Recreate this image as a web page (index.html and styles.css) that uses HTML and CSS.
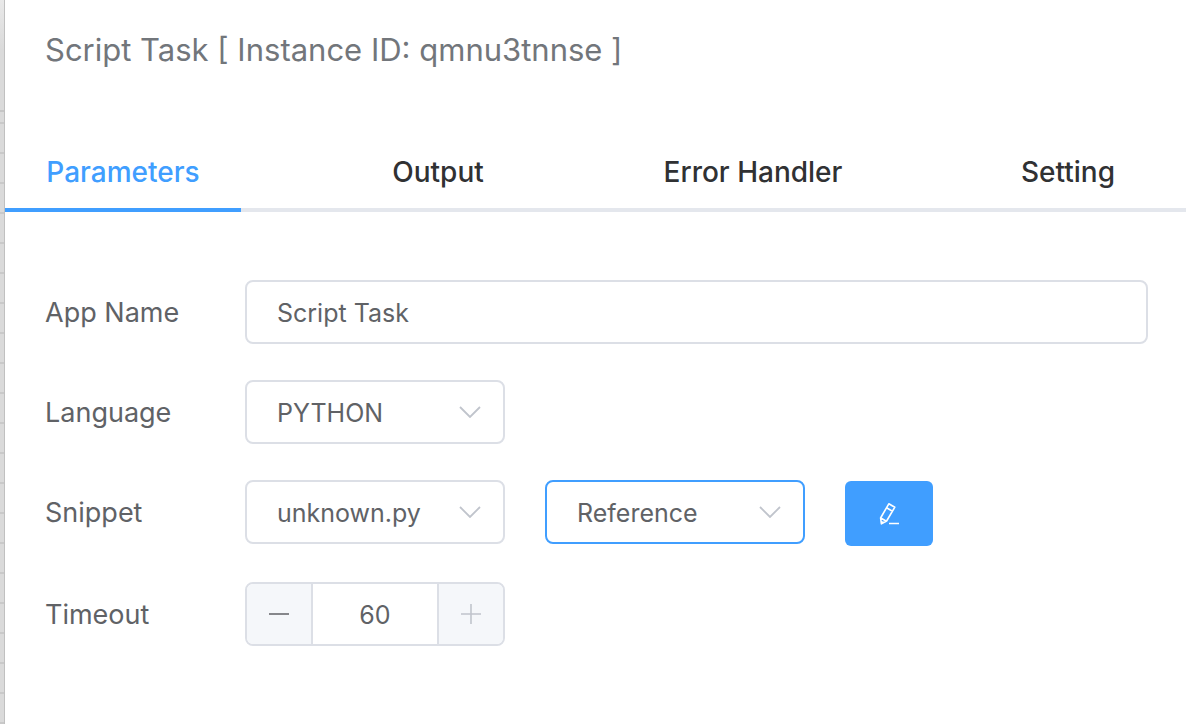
FILE: index.html
```html
<!DOCTYPE html>
<html lang="en">
<head>
<meta charset="utf-8">
<title>Script Task</title>
<link rel="stylesheet" href="styles.css">
</head>
<body>
<div class="canvas-edge"></div>
<main class="drawer">
  <h1 class="title">Script Task [ Instance ID: qmnu3tnnse ]</h1>
  <nav class="tabs" role="tablist">
    <button class="tab active" type="button" role="tab" aria-selected="true">Parameters</button>
    <button class="tab" type="button" role="tab" aria-selected="false">Output</button>
    <button class="tab" type="button" role="tab" aria-selected="false">Error Handler</button>
    <button class="tab" type="button" role="tab" aria-selected="false">Setting</button>
  </nav>
  <form class="form">
    <div class="row">
      <label class="label" for="app">App Name</label>
      <input class="field wide" id="app" type="text" value="Script Task">
    </div>
    <div class="row">
      <label class="label" for="lang">Language</label>
      <div class="select">
        <select class="field" id="lang"><option>PYTHON</option></select>
        <svg class="chevron" viewBox="0 0 22 12"><path d="M1 1 11 11 21 1"/></svg>
      </div>
    </div>
    <div class="row">
      <label class="label" for="snippet">Snippet</label>
      <div class="group">
        <div class="select">
          <select class="field" id="snippet"><option>unknown.py</option></select>
          <svg class="chevron" viewBox="0 0 22 12"><path d="M1 1 11 11 21 1"/></svg>
        </div>
        <div class="select">
          <select class="field focused" aria-label="Snippet type"><option>Reference</option></select>
          <svg class="chevron" viewBox="0 0 22 12"><path d="M1 1 11 11 21 1"/></svg>
        </div>
        <button class="edit" type="button" aria-label="Edit snippet">
          <svg class="pencil" viewBox="0 0 24 24"><path d="M11.8 1.8 17.8 5.2 9.6 19 4.4 21.8 3.6 16ZM9.6 5.8 15.4 9.2M3.8 16 9.4 19.2M4 19.4 6.4 20.8M12 21.5H22"/></svg>
        </button>
      </div>
    </div>
    <div class="row">
      <label class="label" for="timeout">Timeout</label>
      <div class="stepper">
        <button class="step" type="button" aria-label="Decrease"><svg viewBox="0 0 20 20"><path d="M0 10H20"/></svg></button>
        <input class="count" id="timeout" type="text" inputmode="numeric" value="60">
        <button class="step muted" type="button" aria-label="Increase"><svg viewBox="0 0 20 20"><path d="M0 10H20M10 0V20"/></svg></button>
      </div>
    </div>
  </form>
</main>
</body>
</html>
```
FILE: styles.css
```css
* { box-sizing: border-box; }

body {
  margin: 0;
  min-height: 100vh;
  display: flex;
  background: #fff;
  color: #606266;
  font-family: Inter, "Liberation Sans", sans-serif;
  font-size: 27px;
}

button, input, select { font: inherit; color: inherit; margin: 0; }

.canvas-edge {
  flex: none;
  width: 5px;
  background:
    linear-gradient(to right, transparent 4px, #c0c0c0 4px),
    linear-gradient(#c6c6c6, #c6c6c6) 0 110px / 100% 2px no-repeat,
    linear-gradient(#e9e9e9, #dadada 50px, #dadada 110px, transparent 110px),
    repeating-linear-gradient(#dadada 0 2px, #c9c9c9 2px 4px, #dadada 4px 30px);
}

.drawer { flex: 1; min-width: 0; }

.title {
  margin: 0;
  padding: 30px 40px 0;
  font-size: 31px;
  line-height: 40px;
  font-weight: 400;
  color: #72767b;
}

.tabs {
  display: grid;
  grid-template-columns: repeat(4, 1fr);
  column-gap: 79px;
  margin-top: 62px;
  box-shadow: inset 0 -4px #e4e7ed;
}

.tab {
  height: 80px;
  padding: 4px 0 0;
  border: 0;
  border-bottom: 4px solid transparent;
  background: none;
  color: #303133;
  font-size: 28px;
  font-weight: 500;
  white-space: nowrap;
}

.tab.active { color: #409eff; border-color: #409eff; }

.form {
  display: grid;
  gap: 36px;
  padding: 68px 38px 40px 40px;
}

.row { display: flex; }

.label {
  flex: none;
  width: 200px;
  height: 64px;
  line-height: 66px;
}

.field {
  display: block;
  width: 100%;
  height: 64px;
  padding: 2px 30px 0;
  border: 2px solid #dcdfe6;
  border-radius: 8px;
  background: #fff;
  outline: 0;
  appearance: none;
  font-size: 25px;
}

.wide { flex: 1; min-width: 0; }
.focused { border-color: #409eff; }

.select { position: relative; width: 260px; height: 64px; }

.chevron {
  position: absolute;
  right: 24px;
  top: 26px;
  width: 22px;
  height: 12px;
  pointer-events: none;
}

svg { display: block; fill: none; stroke: currentColor; }

.chevron { stroke: #c0c4cc; stroke-width: 1.8; }

.group { display: flex; gap: 40px; height: 66px; }

.edit {
  display: grid;
  place-items: center;
  align-self: end;
  width: 88px;
  height: 65px;
  padding: 0;
  border: 0;
  border-radius: 6px;
  background: #409eff;
  color: #fff;
}

.pencil { width: 24px; height: 24px; stroke-width: 1.6; stroke-linejoin: round; }

.stepper {
  display: flex;
  width: 260px;
  height: 64px;
  border: 2px solid #dcdfe6;
  border-radius: 8px;
  overflow: hidden;
}

.step {
  display: grid;
  place-items: center;
  width: 64px;
  padding: 0;
  border: 0;
  background: #f5f7fa;
}

.step svg { width: 20px; height: 20px; stroke-width: 1.6; }
.muted { color: #c0c4cc; }

.count {
  flex: 1;
  min-width: 0;
  padding: 2px 0 0;
  border: solid #dcdfe6;
  border-width: 0 2px;
  text-align: center;
  outline: 0;
  font-size: 25px;
}
```
